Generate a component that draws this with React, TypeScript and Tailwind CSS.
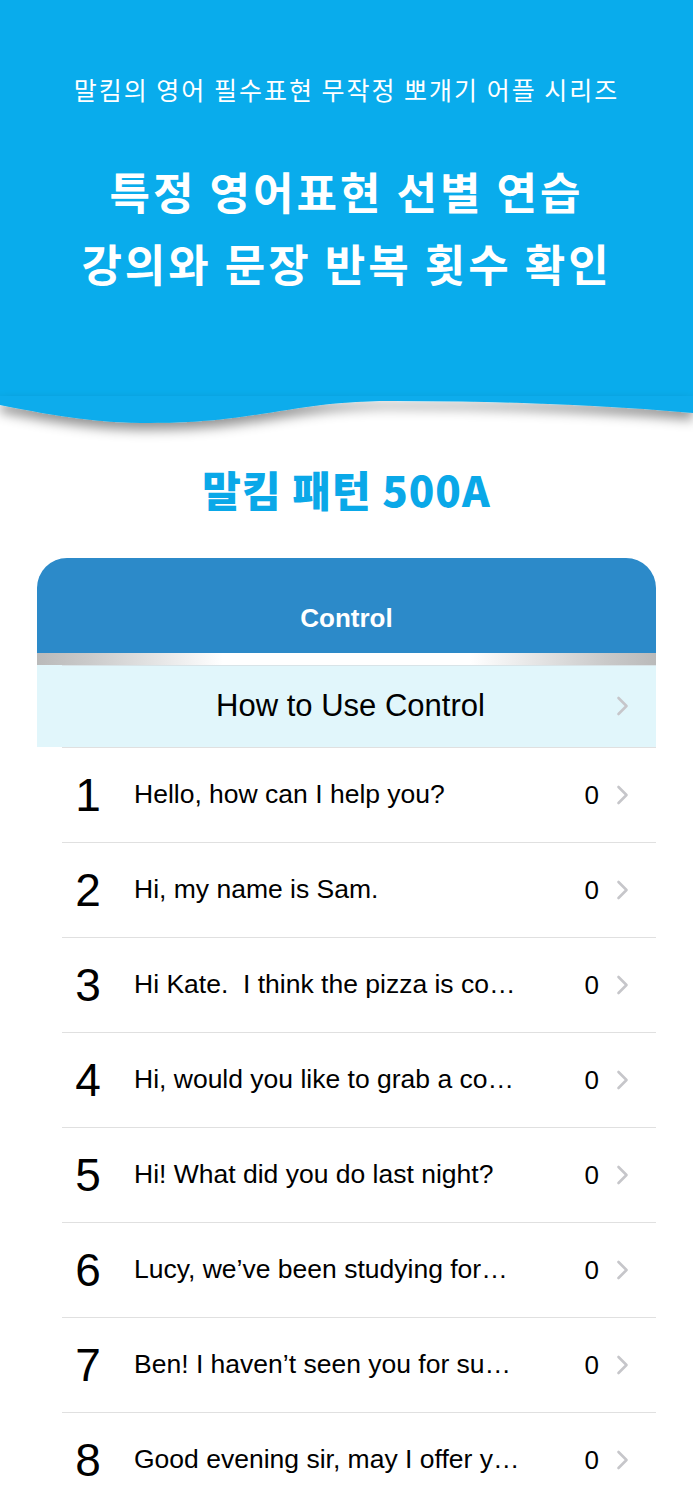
const kr = { fontFamily: '"Noto Sans CJK KR", "Noto Sans", sans-serif' };
const en = { fontFamily: '"Liberation Sans", "Noto Sans CJK KR", sans-serif' };

const rows = [
  "Hello, how can I help you?",
  "Hi, my name is Sam.",
  "Hi Kate.  I think the pizza is co…",
  "Hi, would you like to grab a co…",
  "Hi! What did you do last night?",
  "Lucy, we’ve been studying for…",
  "Ben! I haven’t seen you for su…",
  "Good evening sir, may I offer y…",
];

const Chevron = () => (
  <svg width="14" height="22" viewBox="0 0 14 22" className="shrink-0 block">
    <polyline
      points="2.5,3 10.5,11 2.5,19"
      fill="none"
      stroke="#c6c6ca"
      strokeWidth="2.6"
      strokeLinecap="round"
      strokeLinejoin="round"
    />
  </svg>
);

const Wave = () => (
  <svg
    width="693"
    height="40"
    viewBox="0 0 693 40"
    className="block overflow-visible"
  >
    <defs>
      <filter id="waveShadow" x="-10%" y="-50%" width="120%" height="300%">
        <feDropShadow dx="0" dy="7" stdDeviation="6" floodColor="#000" floodOpacity="0.42" />
      </filter>
    </defs>
    <path
      d="M0,-2 L0,7 C60,19 100,25 150,25 C260,25 290,3 393,3 C500,3 600,7 693,15 L693,-2 Z"
      fill="#09acec"
      filter="url(#waveShadow)"
    />
  </svg>
);

export default function App() {
  return (
    <div className="w-[693px] h-[1500px] overflow-hidden bg-white">
      {/* header */}
      <div className="bg-[#09acec] h-[398px] pt-[71px] text-white text-center" style={kr}>
        <p className="text-[25px] leading-[36px] tracking-[2px]">말킴의 영어 필수표현 무작정 뽀개기 어플 시리즈</p>
        <h1 className="mt-[48px] text-[44px] leading-[72px] font-bold tracking-[3px]">
          특정 영어표현 선별 연습
          <br />
          강의와 문장 반복 횟수 확인
        </h1>
      </div>
      <Wave />

      <h2
        className="mt-[26px] text-center text-[42px] leading-[50px] font-black tracking-[1px] text-[#0aa8e8]"
        style={kr}
      >
        말킴 패턴 500A
      </h2>

      {/* card */}
      <div className="mx-[37px] mt-[44px]">
        <div
          className="h-[95px] pt-[26px] rounded-t-[30px] bg-[#2c8ac9] flex items-center justify-center text-white text-[26px] font-bold"
          style={en}
        >
          Control
        </div>
        <div className="h-[12px] bg-[linear-gradient(to_right,#bababa_0%,#c9c9c9_8%,#ffffff_30%,#ffffff_70%,#c9c9c9_92%,#bababa_100%)]" />
        <div className="bg-[#e1f6fb] h-[82px] relative flex items-center justify-center" style={en}>
          <div className="absolute top-0 left-[25px] right-0 h-px bg-[#d8e4e8]" />
          <span className="text-[31px] text-black ml-[8px]">How to Use Control</span>
          <div className="absolute right-[26px] top-1/2 -translate-y-1/2">
            <Chevron />
          </div>
        </div>
        <div className="pl-[25px]">
          {rows.map((t, i) => (
            <div
              key={i}
              className="h-[95px] border-t border-[#e0e0e0] flex items-center text-black"
              style={en}
            >
              <span className="w-[52px] text-center text-[46px] leading-none">{i + 1}</span>
              <span className="ml-[20px] w-[400px] text-[26.5px] whitespace-pre overflow-hidden">
                {t}
              </span>
              <span className="ml-auto text-[26px]">0</span>
              <span className="ml-[17px] mr-[26px]">
                <Chevron />
              </span>
            </div>
          ))}
        </div>
      </div>
    </div>
  );
}
